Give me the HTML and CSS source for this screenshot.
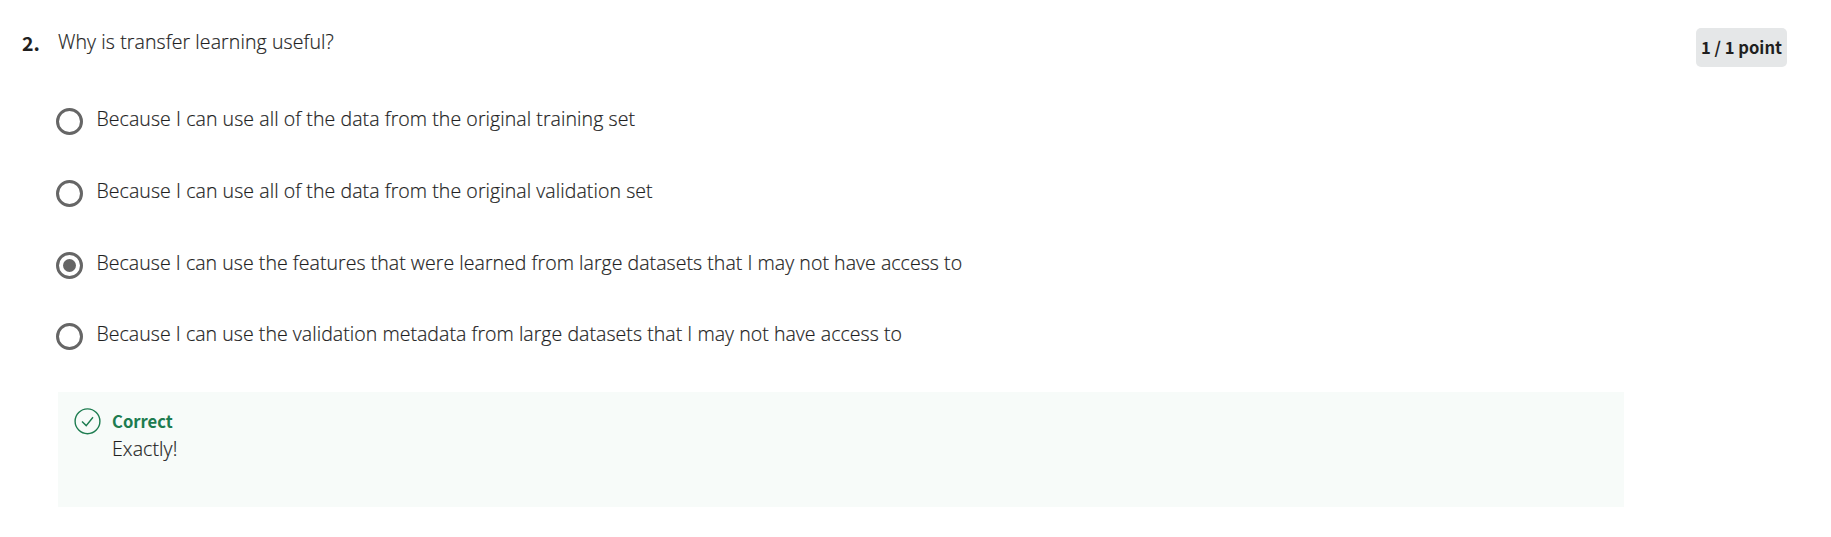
FILE: index.html
```html
<!DOCTYPE html>
<html lang="en"><head><meta charset="utf-8"><title>Quiz</title><link rel="stylesheet" href="styles.css"></head>
<body>
<main class="question">
<div class="number">2.</div>
<section class="content">
<h1 class="prompt">Why is transfer learning useful?</h1>
<div class="options">
<label class="option"><span class="radio"></span><span class="text short">Because I can use all of the data from the original training set</span></label>
<label class="option"><span class="radio"></span><span class="text short">Because I can use all of the data from the original validation set</span></label>
<label class="option"><span class="radio selected"></span><span class="text">Because I can use the features that were learned from large datasets that I may not have access to</span></label>
<label class="option"><span class="radio"></span><span class="text">Because I can use the validation metadata from large datasets that I may not have access to</span></label>
</div>
<div class="feedback">
<svg class="check" viewBox="0 0 28 28"><circle cx="13.5" cy="14.3" r="12.4"/><path d="M8 14.4l4.2 4.2L19 10.2"/></svg>
<div><div class="verdict">Correct</div><div class="note">Exactly!</div></div>
</div>
</section>
<div class="points">1 / 1 point</div>
</main>
</body></html>
```
FILE: styles.css
```css
*{box-sizing:border-box}
body{margin:0;background:#fff;color:#1f1f1f;font-family:"Open Sans",sans-serif;font-size:19.5px;font-weight:300}
.question{display:flex;align-items:flex-start;padding:28px 44px 0 22px}
.number{width:36px;padding-top:1px;font:700 19.5px/27px "Noto Sans CJK SC",sans-serif;color:#1f1f1f}
.content{width:1566px}
.prompt{margin:0;font-size:19.5px;font-weight:300;line-height:28px;letter-spacing:.1px}
.prompt,.text,.note{-webkit-text-stroke:.2px #1f1f1f}
.options{display:grid;grid-template-rows:72px 72px 71px 72px;margin-top:49px}
.option{display:flex;align-items:flex-start;gap:13.5px;line-height:28px;margin-left:-2px}
.radio{display:flex;width:27px;height:27px;margin-top:3px;border:3px solid #666;border-radius:50%}
.selected::after{content:"";width:13px;height:13px;margin:auto;border-radius:50%;background:#666}
.text{letter-spacing:.05px}
.short{letter-spacing:.075px}
.feedback{display:flex;gap:10px;height:115px;padding:15px 16px;background:#f7fbf9;line-height:28px}
.check{width:28px;height:28px;fill:none;stroke:#1d7c50;stroke-width:1.4}
.verdict{color:#1d7c50;font:700 16.6px/28px "Noto Sans CJK SC",sans-serif}
.note{letter-spacing:.1px}
.points{margin-left:auto;width:91px;height:39px;border-radius:5px;background:#e5e7e8;color:#1f1f1f;text-align:center;font:700 16.6px/39px "Noto Sans CJK SC",sans-serif;white-space:nowrap}
```
